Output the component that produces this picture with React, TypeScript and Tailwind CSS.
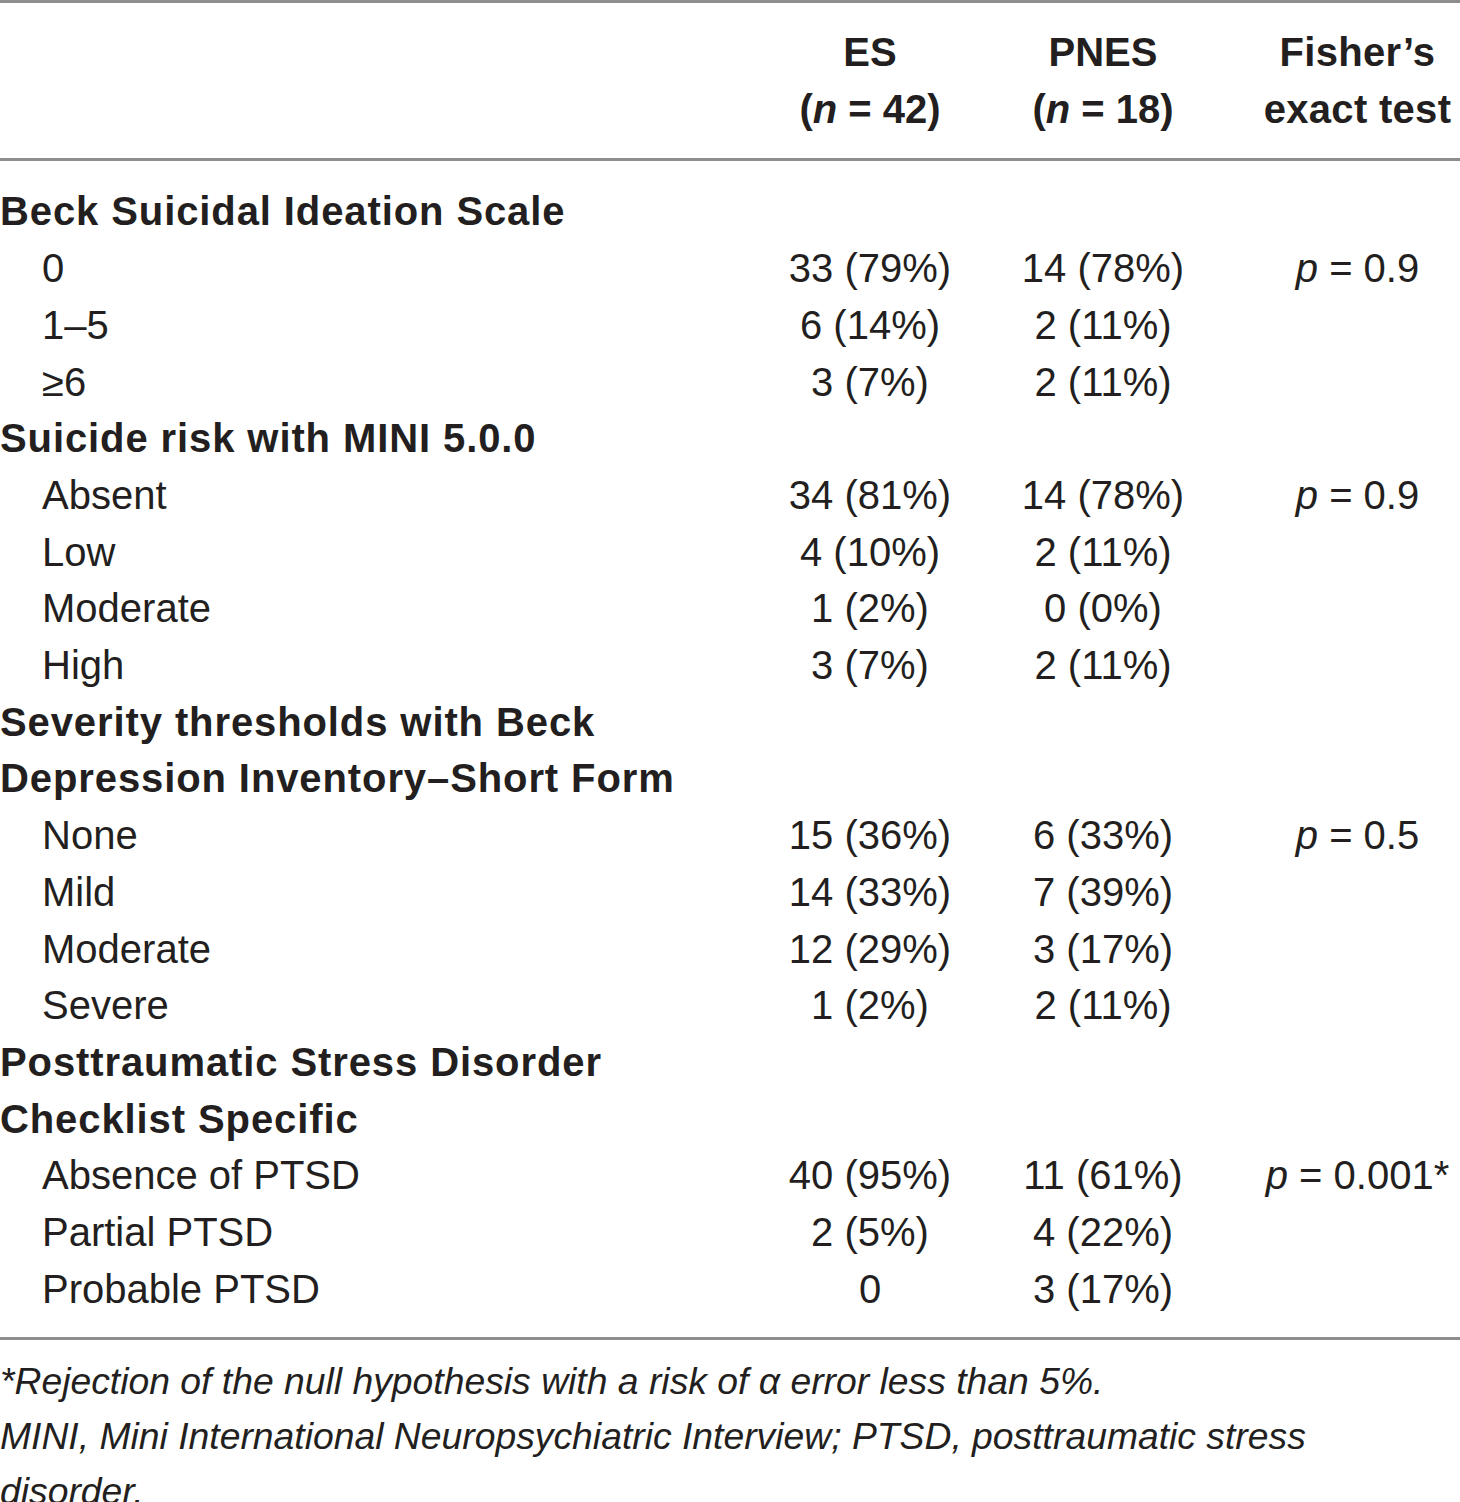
const rows: { label: string; bold?: boolean; es?: string; pnes?: string; p?: string }[] = [
  { label: 'Beck Suicidal Ideation Scale', bold: true },
  { label: '0', es: '33 (79%)', pnes: '14 (78%)', p: '0.9' },
  { label: '1–5', es: '6 (14%)', pnes: '2 (11%)' },
  { label: '≥6', es: '3 (7%)', pnes: '2 (11%)' },
  { label: 'Suicide risk with MINI 5.0.0', bold: true },
  { label: 'Absent', es: '34 (81%)', pnes: '14 (78%)', p: '0.9' },
  { label: 'Low', es: '4 (10%)', pnes: '2 (11%)' },
  { label: 'Moderate', es: '1 (2%)', pnes: '0 (0%)' },
  { label: 'High', es: '3 (7%)', pnes: '2 (11%)' },
  { label: 'Severity thresholds with Beck', bold: true },
  { label: 'Depression Inventory–Short Form', bold: true },
  { label: 'None', es: '15 (36%)', pnes: '6 (33%)', p: '0.5' },
  { label: 'Mild', es: '14 (33%)', pnes: '7 (39%)' },
  { label: 'Moderate', es: '12 (29%)', pnes: '3 (17%)' },
  { label: 'Severe', es: '1 (2%)', pnes: '2 (11%)' },
  { label: 'Posttraumatic Stress Disorder', bold: true },
  { label: 'Checklist Specific', bold: true },
  { label: 'Absence of PTSD', es: '40 (95%)', pnes: '11 (61%)', p: '0.001*' },
  { label: 'Partial PTSD', es: '2 (5%)', pnes: '4 (22%)' },
  { label: 'Probable PTSD', es: '0', pnes: '3 (17%)' },
];

export default function App() {
  return (
    <div className="w-[1460px] bg-white text-[#231f20] font-['Liberation_Sans',Arial,sans-serif]">
      <div className="h-[3px] bg-[#8e8e8e]" />

      {/* Header */}
      <div className="grid grid-cols-[755px_230px_236px_1fr] pt-[21px] pb-[21px] text-[40px] leading-[56.7px] font-bold">
        <div />
        <div className="text-center">ES<br />(<i>n</i> = 42)</div>
        <div className="text-center">PNES<br />(<i>n</i> = 18)</div>
        <div className="text-center pl-[34px] tracking-[0.3px]">Fisher’s<br />exact test</div>
      </div>

      <div className="h-[3px] bg-[#8e8e8e]" />

      {/* Body */}
      <div className="pt-[22px] pb-[20px] text-[40px] leading-[56.7px]">
        {rows.map((r, i) => (
          <div key={i} className="grid grid-cols-[755px_230px_236px_1fr]">
            <div className={r.bold ? 'font-bold whitespace-nowrap tracking-[0.9px]' : 'pl-[42px] whitespace-nowrap'}>{r.label}</div>
            <div className="text-center">{r.es}</div>
            <div className="text-center">{r.pnes}</div>
            <div className="text-center pl-[34px] whitespace-nowrap">
              {r.p && (<><i>p</i> = {r.p}</>)}
            </div>
          </div>
        ))}
      </div>

      <div className="h-[3px] bg-[#8e8e8e]" />

      {/* Footnotes */}
      <div className="pt-[14px] italic text-[37.3px] leading-[55px]">
        <p>*Rejection of the null hypothesis with a risk of α error less than 5%.</p>
        <p>MINI, Mini International Neuropsychiatric Interview; PTSD, posttraumatic stress<br />disorder.</p>
      </div>
    </div>
  );
}
